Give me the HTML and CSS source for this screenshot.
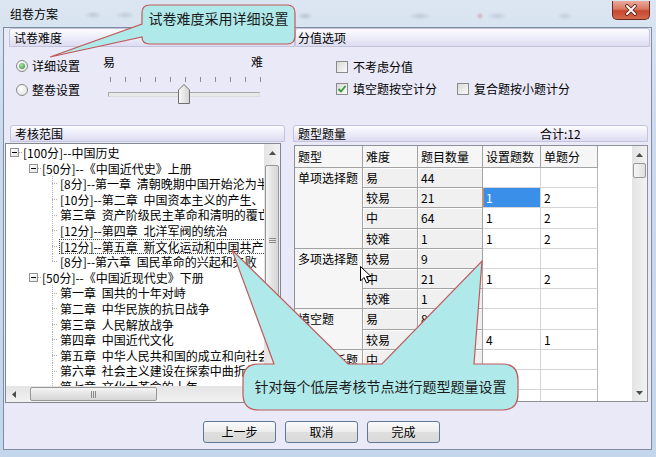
FILE: index.html
```html
<!DOCTYPE html>
<html lang="zh-CN">
<head>
    <meta charset="UTF-8">
    <title>组卷方案</title>
    <link rel="stylesheet" href="styles.css">
</head>
<body>
<div class="window">
    <div class="titlebar">
        <span class="title">组卷方案</span>
        <span class="close">
            <svg width="16" height="12" viewBox="0 0 16 12"><path d="M4 2 L12 10 M12 2 L4 10" stroke="#5a1a10" stroke-width="3.6" stroke-linecap="round"/><path d="M4 2 L12 10 M12 2 L4 10" stroke="#fff" stroke-width="2" stroke-linecap="round"/></svg>
        </span>
    </div>
    <div class="client">
        <div class="top">
            <div class="difficulty">
                <div class="bar">试卷难度</div>
                <div class="group-body">
                    <div class="radios">
                        <span class="radio-row"><span class="radio checked"></span>详细设置</span>
                        <span class="radio-row"><span class="radio"></span>整卷设置</span>
                    </div>
                    <div class="slider">
                        <div class="slider-labels"><span>易</span><span>难</span></div>
                        <div class="ticks"><i></i><i></i><i></i><i></i><i></i><i></i><i></i><i></i><i></i><i></i><i></i></div>
                        <div class="track">
                            <svg class="thumb" width="12" height="20" viewBox="0 0 12 20">
                                <defs><linearGradient id="tg" x1="0" x2="1"><stop offset="0" stop-color="#fafafa"/><stop offset="1" stop-color="#d2d2d2"/></linearGradient></defs>
                                <path d="M0.5 19.5 V6 L6 0.5 L11.5 6 V19.5 Z" fill="url(#tg)" stroke="#6f6f6f"/>
                            </svg>
                        </div>
                    </div>
                </div>
            </div>
            <div class="scoring">
                <div class="bar">分值选项</div>
                <div class="checks">
                    <div class="check-row">
                        <span class="check"><span class="box"></span>不考虑分值</span>
                    </div>
                    <div class="check-row">
                        <span class="check"><span class="box"><svg width="10" height="10" viewBox="0 0 10 10"><path d="M1.5 5 L4 7.5 L8.5 2" fill="none" stroke="#2f9a2f" stroke-width="1.8"/></svg></span>填空题按空计分</span>
                        <span class="check"><span class="box"></span>复合题按小题计分</span>
                    </div>
                </div>
            </div>
        </div>

        <div class="middle">
            <div class="scope">
                <div class="bar">考核范围</div>
                <div class="tree">
                    <div class="tree-main">
                        <div class="rows">
                            <div class="node lv0"><span class="exp"></span><span class="dash"></span>[100分]--中国历史</div>
                            <div class="node lv1"><span class="exp"></span><span class="dash"></span>[50分]--《中国近代史》上册</div>
                            <div class="node lv2"><span class="stem"></span><span class="label">[8分]--第一章 清朝晚期中国开始沦为半殖民地半封建社会</span></div>
                            <div class="node lv2"><span class="stem"></span><span class="label">[10分]--第二章 中国资本主义的产生、发展和民族意识的觉醒</span></div>
                            <div class="node lv2"><span class="stem"></span><span class="label">第三章 资产阶级民主革命和清明的覆亡</span></div>
                            <div class="node lv2"><span class="stem"></span><span class="label">[12分]--第四章 北洋军阀的统治</span></div>
                            <div class="node lv2"><span class="stem"></span><span class="label focused">[12分]--第五章 新文化运动和中国共产党的诞生</span></div>
                            <div class="node lv2"><span class="stem last"></span><span class="label">[8分]--第六章 国民革命的兴起和失败</span></div>
                            <div class="node lv1"><span class="exp"></span><span class="dash"></span>[50分]--《中国近现代史》下册</div>
                            <div class="node lv2"><span class="stem"></span><span class="label">第一章 国共的十年对峙</span></div>
                            <div class="node lv2"><span class="stem"></span><span class="label">第二章 中华民族的抗日战争</span></div>
                            <div class="node lv2"><span class="stem"></span><span class="label">第三章 人民解放战争</span></div>
                            <div class="node lv2"><span class="stem"></span><span class="label">第四章 中国近代文化</span></div>
                            <div class="node lv2"><span class="stem"></span><span class="label">第五章 中华人民共和国的成立和向社会主义过渡</span></div>
                            <div class="node lv2"><span class="stem"></span><span class="label">第六章 社会主义建设在探索中曲折发展</span></div>
                            <div class="node lv2"><span class="stem"></span><span class="label">第七章 文化大革命的十年</span></div>
                        </div>
                        <div class="vscroll">
                            <span class="arrow"><svg width="7" height="4" viewBox="0 0 7 4"><path d="M0 4 L3.5 0 L7 4 Z" fill="#4d4d4d"/></svg></span>
                            <span class="vthumb"><svg width="7" height="5" viewBox="0 0 7 5"><path d="M0 0.5 H7 M0 2.5 H7 M0 4.5 H7" stroke="#8a8a8a"/></svg></span>
                        </div>
                    </div>
                    <div class="hscroll-row">
                        <div class="hscroll">
                            <span class="arrow h"><svg width="4" height="7" viewBox="0 0 4 7"><path d="M4 0 L0 3.5 L4 7 Z" fill="#4d4d4d"/></svg></span>
                            <span class="hthumb"><svg width="5" height="7" viewBox="0 0 5 7"><path d="M0.5 0 V7 M2.5 0 V7 M4.5 0 V7" stroke="#8a8a8a"/></svg></span>
                        </div>
                        <div class="corner"></div>
                    </div>
                </div>
            </div>

            <div class="quota">
                <div class="bar"><span>题型题量</span><span class="total">合计:12</span></div>
                <div class="grid-box">
                    <div class="grid">
                        <div class="hd">题型</div><div class="hd">难度</div><div class="hd">题目数量</div><div class="hd">设置题数</div><div class="hd">单题分</div>

                        <div class="type span4">单项选择题</div><div class="ro">易</div><div class="ro">44</div><div class="in"></div><div class="in"></div>
                        <div class="ro">较易</div><div class="ro">21</div><div class="in selected">1</div><div class="in">2</div>
                        <div class="ro">中</div><div class="ro">64</div><div class="in">1</div><div class="in">2</div>
                        <div class="ro">较难</div><div class="ro">1</div><div class="in">1</div><div class="in">2</div>

                        <div class="type span3">多项选择题</div><div class="ro">较易</div><div class="ro">9</div><div class="in"></div><div class="in"></div>
                        <div class="ro">中</div><div class="ro">21</div><div class="in">1</div><div class="in">2</div>
                        <div class="ro">较难</div><div class="ro">1</div><div class="in"></div><div class="in"></div>

                        <div class="type span2">填空题</div><div class="ro">易</div><div class="ro">8</div><div class="in"></div><div class="in"></div>
                        <div class="ro">较易</div><div class="ro">5</div><div class="in">4</div><div class="in">1</div>

                        <div class="type span3">材料分析题</div><div class="ro">中</div><div class="ro">3</div><div class="in"></div><div class="in"></div>
                        <div class="ro">较难</div><div class="ro">2</div><div class="in"></div><div class="in"></div>
                        <div class="ro">难</div><div class="ro">1</div><div class="in"></div><div class="in"></div>
                    </div>
                    <div class="grid-blank"></div>
                    <div class="gscroll">
                        <span class="arrow"><svg width="7" height="4" viewBox="0 0 7 4"><path d="M0 4 L3.5 0 L7 4 Z" fill="#4d4d4d"/></svg></span>
                        <span class="gthumb"></span>
                        <span class="gtrack"></span>
                        <span class="arrow"><svg width="7" height="4" viewBox="0 0 7 4"><path d="M0 0 L3.5 4 L7 0 Z" fill="#4d4d4d"/></svg></span>
                    </div>
                </div>
            </div>
        </div>

        <div class="actions">
            <button class="btn">上一步</button>
            <button class="btn">取消</button>
            <button class="btn">完成</button>
        </div>
    </div>

    <!-- 说明气泡 -->
    <svg class="callouts" width="656" height="457" viewBox="0 0 656 457">
        <path d="M150 5 H287 Q295 5 295 13 V36 Q295 44 287 44 H150 Q142 44 142 37 L50 57 L142 24 V13 Q142 5 150 5 Z" fill="#afe9ea" stroke="#c25a5a" stroke-width="1.2"/>
        <text x="218.5" y="24" text-anchor="middle" class="callout-text">试卷难度采用详细设置</text>

        <path d="M259 364 H274 L232 250 L348 364 H382 L482 261 L474 364 H502 Q518 364 518 380 V394 Q518 410 502 410 H259 Q243 410 243 394 V380 Q243 364 259 364 Z" fill="#afe9ea" stroke="#c25a5a" stroke-width="1.2"/>
        <text x="380.5" y="392" text-anchor="middle" class="callout-text">针对每个低层考核节点进行题型题量设置</text>

        <path transform="translate(360 266)" d="M0.5 0.5 V15 L4 11.5 L6.5 17 L9 16 L6.5 10.5 L11 10.5 Z" fill="#fff" stroke="#000" stroke-width="1"/>
    </svg>
</div>
</body>
</html>
```

FILE: styles.css
```css
:root {
    --panel: #e9e9f8;
    --bar-top: #fcfcff;
    --bar-bottom: #dddcf1;
    --bar-border: #c3c3dc;
    --grid-line: #a3a3a3;
    --cell-line: #d5d5d5;
    --btn-border: #5f7893;
}
body {
    margin: 0;
    font-family: "Noto Sans CJK SC", "Liberation Sans", sans-serif;
    font-size: 12px;
    color: #000;
}
.window {
    position: relative;
    width: 656px;
    height: 457px;
    overflow: hidden;
    background: linear-gradient(#dce6f2, #cbdaed 30%, #c4d6eb);
}

/* 标题栏 */
.titlebar {
    height: 27px;
    display: flex;
    justify-content: space-between;
    align-items: flex-start;
    padding: 0 6px 0 10px;
    background:
        radial-gradient(ellipse 9px 4px at 93px 15px, rgba(90,100,120,.22), transparent),
        radial-gradient(ellipse 10px 4px at 125px 15px, rgba(90,100,120,.2), transparent),
        radial-gradient(ellipse 8px 4px at 305px 16px, rgba(90,100,120,.25), transparent),
        radial-gradient(ellipse 12px 4px at 420px 16px, rgba(90,100,120,.2), transparent),
        radial-gradient(ellipse 4px 4px at 480px 16px, rgba(200,60,60,.3), transparent),
        radial-gradient(ellipse 10px 4px at 497px 16px, rgba(90,100,120,.2), transparent),
        radial-gradient(ellipse 8px 4px at 565px 16px, rgba(90,100,120,.18), transparent);
}
.title {
    margin-top: 8px;
    line-height: 12px;
}
.close {
    width: 38px;
    height: 19px;
    margin-top: 1px;
    box-sizing: border-box;
    border: 1px solid #6b2a20;
    border-top: none;
    border-radius: 0 0 5px 5px;
    background: linear-gradient(#e9aa9c, #d9775f 45%, #c8472f 55%, #d26a4e);
    display: flex;
    align-items: center;
    justify-content: center;
}

.client {
    margin: 0 4px 0 3px;
    height: 423px;
    box-sizing: border-box;
    border: 1px solid #7d8da3;
    background: var(--panel);
    display: flex;
    flex-direction: column;
}
.bar {
    box-sizing: border-box;
    border: 1px solid var(--bar-border);
    border-radius: 3px 3px 0 0;
    background: linear-gradient(var(--bar-top), var(--bar-bottom));
    padding-left: 4px;
}

/* 上部：试卷难度 / 分值选项 */
.top {
    height: 97px;
    display: flex;
}
.top .bar {
    height: 19px;
    line-height: 17px;
}
.difficulty {
    width: 291px;
    padding-left: 5px;
    box-sizing: border-box;
}
.group-body {
    display: flex;
}
.radios {
    width: 94px;
    padding: 12px 0 0 7px;
    box-sizing: border-box;
    display: flex;
    flex-direction: column;
    gap: 10px;
}
.radio-row {
    display: flex;
    align-items: center;
    gap: 4px;
    height: 14px;
    line-height: 14px;
}
.radio {
    width: 12px;
    height: 12px;
    box-sizing: border-box;
    border: 1px solid #8a8a8a;
    border-radius: 50%;
    background: radial-gradient(circle at 40% 35%, #fff, #dedede);
    display: flex;
    align-items: center;
    justify-content: center;
}
.radio.checked::after {
    content: "";
    width: 6px;
    height: 6px;
    border-radius: 50%;
    background: radial-gradient(circle at 40% 35%, #a8e6a8, #2c8a2c);
}
.slider {
    margin-top: 9px;
    width: 160px;
}
.slider-labels {
    display: flex;
    justify-content: space-between;
    height: 12px;
    line-height: 12px;
}
.ticks {
    display: flex;
    gap: 14px;
    height: 5px;
    margin-top: 9px;
    padding-left: 7px;
}
.ticks i {
    width: 1px;
    background: #8d8d8d;
}
.track {
    position: relative;
    margin: 10px 0 0 5px;
    width: 152px;
    height: 5px;
    box-sizing: border-box;
    border: 1px solid #a9a9a9;
    border-right-color: #dcdcdc;
    border-bottom-color: #dcdcdc;
    background: #e8eaea;
}
.thumb {
    position: absolute;
    left: 69px;
    top: -9px;
}
.scoring {
    flex: 1;
    padding-right: 1px;
}
.scoring .bar {
    padding-left: 2px;
}
.checks {
    padding: 14px 0 0 41px;
    display: flex;
    flex-direction: column;
    gap: 10px;
}
.check-row {
    display: flex;
    gap: 20px;
    height: 12px;
    line-height: 12px;
}
.check {
    display: flex;
    align-items: center;
    gap: 5px;
}
.box {
    width: 12px;
    height: 12px;
    box-sizing: border-box;
    border: 1px solid #8a8a8a;
    background: linear-gradient(135deg, #d9d9d9, #fbfbfb);
    display: flex;
    align-items: center;
    justify-content: center;
}

/* 中部：考核范围 / 题型题量 */
.middle {
    height: 278px;
    display: flex;
}
.middle .bar {
    height: 17px;
    line-height: 15px;
}
.scope {
    width: 280px;
    margin-left: 1px;
}
.scope .bar {
    margin-left: 5px;
}
.tree {
    margin-top: 1px;
    width: 276px;
    height: 260px;
    box-sizing: border-box;
    border: 1px solid #828790;
    background: #fff;
    display: flex;
    flex-direction: column;
}
.tree-main {
    height: 242px;
    display: flex;
}
.rows {
    flex: 1;
    overflow: hidden;
    padding-top: 1px;
}
.node {
    height: 15.6px;
    line-height: 15.6px;
    display: flex;
    align-items: center;
    white-space: nowrap;
}
.lv0 { padding-left: 4px; }
.lv1 { padding-left: 23px; }
.lv2 { padding-left: 46px; }
.exp {
    flex: none;
    width: 9px;
    height: 9px;
    box-sizing: border-box;
    border: 1px solid #919191;
    background: linear-gradient(#000, #000) center / 5px 1px no-repeat, linear-gradient(135deg, #fff, #e4e4e4);
}
.dash {
    flex: none;
    width: 4px;
    height: 1px;
    background: repeating-linear-gradient(to right, #a0a0a0 0 1px, transparent 1px 2px);
}
.stem {
    flex: none;
    width: 6px;
    align-self: stretch;
    background:
        repeating-linear-gradient(#b0b0b0 0 1px, transparent 1px 2px) left top / 1px 100% no-repeat,
        repeating-linear-gradient(to right, #b0b0b0 0 1px, transparent 1px 2px) left 50% / 6px 1px no-repeat;
}
.stem.last {
    background:
        repeating-linear-gradient(#b0b0b0 0 1px, transparent 1px 2px) left top / 1px 50% no-repeat,
        repeating-linear-gradient(to right, #b0b0b0 0 1px, transparent 1px 2px) left 50% / 6px 1px no-repeat;
}
.label {
    margin-left: 1px;
    padding: 0 1px;
    word-spacing: 3px;
}
.label.focused {
    outline: 1px dotted #444;
    outline-offset: -1px;
}
.vscroll {
    width: 16px;
    display: flex;
    flex-direction: column;
    background: linear-gradient(to right, #e4e4e4, #f2f2f2);
}
.arrow {
    flex: none;
    height: 17px;
    display: flex;
    align-items: center;
    justify-content: center;
}
.arrow.h {
    width: 16px;
    height: 16px;
}
.vthumb {
    margin: 4px 1px 0;
    height: 150px;
    box-sizing: border-box;
    border: 1px solid #979797;
    border-radius: 2px;
    background: linear-gradient(to right, #f5f5f5, #e4e4e4 50%, #d6d6d6);
    display: flex;
    align-items: center;
    justify-content: center;
}
.hscroll-row {
    height: 16px;
    display: flex;
}
.hscroll {
    flex: 1;
    display: flex;
    align-items: center;
    background: linear-gradient(#e4e4e4, #f2f2f2);
}
.hthumb {
    margin-left: 8px;
    width: 127px;
    height: 14px;
    box-sizing: border-box;
    border: 1px solid #979797;
    border-radius: 2px;
    background: linear-gradient(#f5f5f5, #e4e4e4 50%, #d6d6d6);
    display: flex;
    align-items: center;
    justify-content: center;
}
.corner {
    width: 16px;
    background: #f0f0f0;
}

.quota {
    width: 355px;
    margin-left: 8px;
}
.total {
    margin-left: 194px;
}
.grid-box {
    margin: 3px 0 0 1px;
    height: 257px;
    box-sizing: border-box;
    border: 1px solid #8e9099;
    background: #fff;
    display: flex;
}
.grid {
    width: 303px;
    overflow: hidden;
    display: grid;
    grid-template-columns: 68px 55px 65px 58px 57px;
    grid-template-rows: 22px repeat(12, 20.2px);
}
.grid > div {
    box-sizing: border-box;
    padding-left: 3px;
    line-height: 19px;
    border-right: 1px solid var(--grid-line);
    border-bottom: 1px solid var(--grid-line);
    white-space: nowrap;
    overflow: hidden;
}
.grid .hd {
    background: #f6f6f6;
    line-height: 21px;
}
.grid .type {
    background: #f6f6f6;
}
.span4 { grid-row: span 4; }
.span3 { grid-row: span 3; }
.span2 { grid-row: span 2; }
.grid .ro {
    background: #f0f0f0;
    box-shadow: inset 1px 1px #fff;
}
.grid .in {
    background: #fff;
    border-right-color: var(--cell-line);
    border-bottom-color: var(--cell-line);
}
.grid .in + .in {
    border-right-color: #b8b8b8;
}
.grid .in.selected {
    background: #3a90e8;
    color: #fff;
    box-shadow: inset 1px 0 #d98a4a;
}
.grid-blank {
    flex: 1;
}
.gscroll {
    width: 15px;
    display: flex;
    flex-direction: column;
    background: linear-gradient(to right, #e4e4e4, #f2f2f2);
}
.gthumb {
    flex: none;
    margin: 0 1px;
    height: 15px;
    box-sizing: border-box;
    border: 1px solid #979797;
    border-radius: 2px;
    background: linear-gradient(to right, #f5f5f5, #e0e0e0);
}
.gtrack {
    flex: 1;
}

/* 底部按钮 */
.actions {
    flex: 1;
    display: flex;
    align-items: flex-start;
    gap: 9px;
    padding: 18px 0 0 199px;
}
.btn {
    width: 73px;
    height: 22px;
    padding: 0;
    box-sizing: border-box;
    border: 1px solid var(--btn-border);
    border-radius: 3px;
    background: linear-gradient(#fafafa, #ededed 48%, #dfdfdf 52%, #d9d9d9);
    font-family: inherit;
    font-size: 12px;
    color: #000;
    line-height: 20px;
}

.callouts {
    position: absolute;
    left: 0;
    top: 0;
    pointer-events: none;
}
.callout-text {
    font-family: "Noto Sans CJK SC", sans-serif;
    font-size: 14px;
    fill: #1a1a1a;
}
```
